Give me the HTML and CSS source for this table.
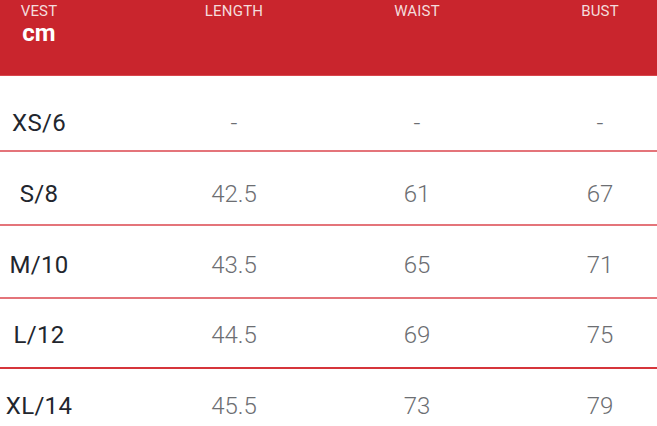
FILE: index.html
```html
<!DOCTYPE html>
<html>
<head>
<meta charset="utf-8">
<link rel="stylesheet" href="styles.css">
</head>
<body>
<div class="chart">
  <div class="row head">
    <div class="cell c1"><span class="hl">VEST</span><span class="unit">cm</span></div>
    <div class="cell"><span class="hl">LENGTH</span></div>
    <div class="cell"><span class="hl">WAIST</span></div>
    <div class="cell"><span class="hl">BUST</span></div>
  </div>
  <div class="row r1">
    <div class="cell c1 size">XS/6</div>
    <div class="cell val">-</div>
    <div class="cell val">-</div>
    <div class="cell val">-</div>
  </div>
  <div class="row r2">
    <div class="cell c1 size">S/8</div>
    <div class="cell val">42.5</div>
    <div class="cell val">61</div>
    <div class="cell val">67</div>
  </div>
  <div class="row r3">
    <div class="cell c1 size">M/10</div>
    <div class="cell val">43.5</div>
    <div class="cell val">65</div>
    <div class="cell val">71</div>
  </div>
  <div class="row r4">
    <div class="cell c1 size">L/12</div>
    <div class="cell val">44.5</div>
    <div class="cell val">69</div>
    <div class="cell val">75</div>
  </div>
  <div class="row r5">
    <div class="cell c1 size">XL/14</div>
    <div class="cell val">45.5</div>
    <div class="cell val">73</div>
    <div class="cell val">79</div>
  </div>
</div>
</body>
</html>
```
FILE: styles.css
```css
html, body {
  margin: 0;
  padding: 0;
  background: #ffffff;
  overflow: hidden;
}
.chart {
  width: 657px;
  font-family: Roboto, "Liberation Sans", sans-serif;
}
.row {
  display: grid;
  grid-template-columns: 106px 110px 110px 110px;
  column-gap: 73px;
  align-items: center;
  box-sizing: border-box;
}
.cell {
  text-align: center;
}
.c1 {
  padding-right: 28px;
}
.head {
  background: #c9252d;
  height: 76px;
  align-items: start;
  padding-top: 3px;
  border-bottom: 1px solid #d8464c;
}
.hl {
  display: block;
  font-size: 15px;
  line-height: 16px;
  color: #f4dcdc;
  letter-spacing: 0.2px;
}
.unit {
  display: block;
  font-size: 24px;
  font-weight: 700;
  line-height: 26px;
  color: #ffffff;
  margin-top: 1px;
}
.size {
  font-size: 24px;
  font-weight: 400;
  color: #22262e;
  letter-spacing: 0.3px;
}
.val {
  font-size: 24px;
  font-weight: 300;
  color: #6c6e72;
}
.r1 { height: 76px; border-bottom: 2px solid #e4747a; padding-top: 20px; }
.r2 { height: 74px; border-bottom: 2px solid #e4747a; padding-top: 12px; }
.r3 { height: 73px; border-bottom: 2px solid #e4747a; padding-top: 6px; }
.r4 { height: 70px; border-bottom: 2px solid #d6353b; padding-top: 4px; }
.r5 { height: 72px; padding-top: 2px; }
```
